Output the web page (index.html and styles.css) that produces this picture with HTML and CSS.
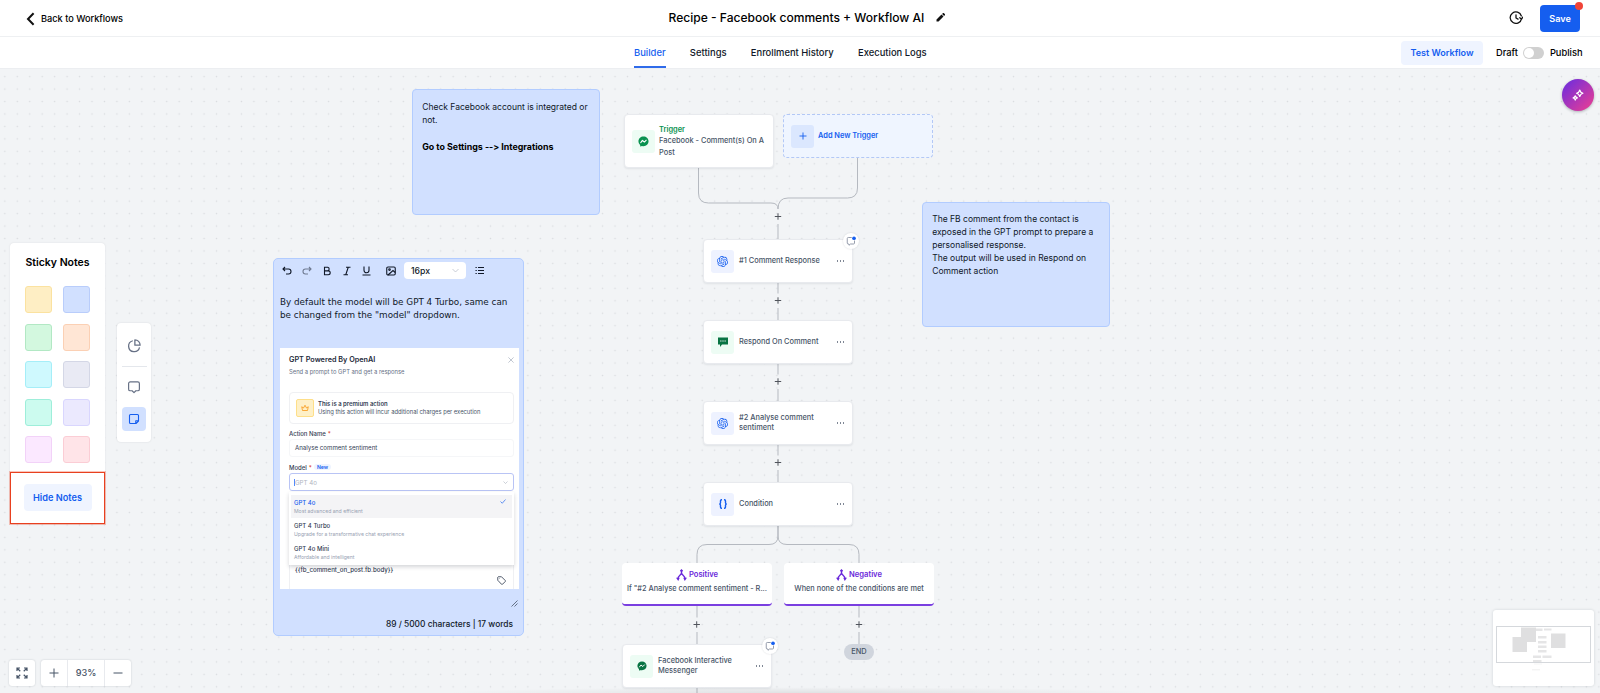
FILE: index.html
```
<!DOCTYPE html>
<html lang="en">
<head>
    <meta charset="UTF-8">
    <meta name="viewport" content="width=device-width, initial-scale=1.0">
    <title>Recipe - Facebook comments + Workflow AI</title>
    <link rel="stylesheet" href="styles.css">
</head>
<body>
    <!-- shared icons -->
    <svg class="sprite">
      <symbol id="i-openai" viewBox="0 0 24 24">
        <path fill="currentColor" d="M22.2819 9.8211a5.9847 5.9847 0 0 0-.5157-4.9108 6.0462 6.0462 0 0 0-6.5098-2.9A6.0651 6.0651 0 0 0 4.9807 4.1818a5.9847 5.9847 0 0 0-3.9977 2.9 6.0462 6.0462 0 0 0 .7427 7.0966 5.98 5.98 0 0 0 .511 4.9107 6.051 6.051 0 0 0 6.5146 2.9001A5.9847 5.9847 0 0 0 13.2599 24a6.0557 6.0557 0 0 0 5.7718-4.2058 5.9894 5.9894 0 0 0 3.9977-2.9001 6.0557 6.0557 0 0 0-.7475-7.0729zm-9.022 12.6081a4.4755 4.4755 0 0 1-2.8764-1.0408l.1419-.0804 4.7783-2.7582a.7948.7948 0 0 0 .3927-.6813v-6.7369l2.02 1.1686a.071.071 0 0 1 .038.0615v5.5826a4.504 4.504 0 0 1-4.4945 4.4944zm-9.6607-4.1254a4.4708 4.4708 0 0 1-.5346-3.0137l.142.0852 4.783 2.7582a.7712.7712 0 0 0 .7806 0l5.8428-3.3685v2.3324a.0804.0804 0 0 1-.0332.0615L9.74 19.9502a4.4992 4.4992 0 0 1-6.1408-1.6464zM2.3408 7.8956a4.485 4.485 0 0 1 2.3655-1.9728V11.6a.7664.7664 0 0 0 .3879.6765l5.8144 3.3543-2.0201 1.1685a.0757.0757 0 0 1-.071 0l-4.8303-2.7865A4.504 4.504 0 0 1 2.3408 7.872zm16.5963 3.8558L13.1038 8.364 15.1192 7.2a.0757.0757 0 0 1 .071 0l4.8303 2.7913a4.4944 4.4944 0 0 1-.6765 8.1042v-5.6772a.79.79 0 0 0-.407-.667zm2.0107-3.0231l-.142-.0852-4.7735-2.7818a.7759.7759 0 0 0-.7854 0L9.409 9.2297V6.8974a.0662.0662 0 0 1 .0284-.0615l4.8303-2.7866a4.4992 4.4992 0 0 1 6.6802 4.66zM8.3065 12.863l-2.02-1.1638a.0804.0804 0 0 1-.038-.0567V6.0742a4.4992 4.4992 0 0 1 7.3757-3.4537l-.142.0805L8.704 5.459a.7948.7948 0 0 0-.3927.6813zm1.0976-2.3654l2.602-1.4998 2.6069 1.4998v2.9994l-2.5974 1.4997-2.6067-1.4997Z"/>
      </symbol>
      <symbol id="i-messenger" viewBox="0 0 24 24">
        <path fill="currentColor" d="M12 1C5.700 1 1 5.600 1 11.600c0 3.200 1.300 5.900 3.500 7.800.200.200.300.400.300.700l.1 2c0 .6.600 1 1.200.8l2.200-1c.2-.1.400-.1.600 0 1 .3 2.100.4 3.100.4 6.300 0 11-4.600 11-10.700S18.300 1 12 1z"/>
        <path fill="none" stroke="#fff" stroke-width="2.4" stroke-linecap="round" stroke-linejoin="round" d="M6 14.300 9.600 9.700 14 13.200 18 9.200"/>
      </symbol>
      <symbol id="i-branch" viewBox="0 0 20 22">
        <path fill="none" stroke="currentColor" stroke-width="2.600" d="M10 3v5M10 7C9.500 12 3.800 11 3.300 18M10 7c.5 5 6.200 4 6.700 11"/>
        <path fill="currentColor" d="M10 0l3 3-3 3-3-3zM0 16h6.800L4 22zM13.200 16H20L16 22z"/>
      </symbol>
      <symbol id="i-comment" viewBox="0 0 20 20">
        <path fill="none" stroke="#8a92a3" stroke-width="1.800" stroke-linejoin="round" d="M11.500 3H4.500A2 2 0 0 0 2.500 5v9a2 2 0 0 0 2 2H6v2.500L9 16h6a2 2 0 0 0 2-2V9"/>
        <circle cx="16" cy="4.500" r="3.700" fill="#155eef"/>
      </symbol>
    </svg>

    <header class="topbar">
      <a class="back">
        <svg width="9" height="14" viewBox="0 0 9 14"><path d="M7.600 1.200 2 7l5.600 5.800" fill="none" stroke="#111" stroke-width="2"/></svg>
        <span>Back to Workflows</span>
      </a>
      <div class="title">
        <span>Recipe - Facebook comments + Workflow AI</span>
        <svg width="9" height="9" viewBox="0 0 18 18"><path d="M1 17v-4L11 3l4 4L5 17zM12.200 1.800 14 0q1-.6 2 .4L17.600 2q1 1 .4 2l-1.800 1.800z" fill="#111"/></svg>
      </div>
      <div class="actions">
        <svg width="14" height="14" viewBox="0 0 24 24" fill="none" stroke="#111" stroke-width="2.200" stroke-linecap="round" stroke-linejoin="round"><path d="M21.500 13a9.800 9.800 0 1 1-.3-4.500M12 6.500V12l3.500 2M18.500 11.500l3 2.500 2-3.500"/></svg>
        <button class="save">Save<i class="unsaved"></i></button>
      </div>
    </header>

    <nav class="tabbar">
      <div class="tabs">
        <a class="tab active">Builder</a>
        <a class="tab">Settings</a>
        <a class="tab">Enrollment History</a>
        <a class="tab">Execution Logs</a>
      </div>
      <div class="publish">
        <button class="test">Test Workflow</button>
        <span>Draft</span>
        <i class="toggle"></i>
        <span>Publish</span>
      </div>
    </nav>

    <main class="canvas">
      <svg class="lines" viewBox="0 68 1600 625">
        <g class="edges">
          <path d="M698.500 168v25q0 10 10 10H771q7 0 7 6"/>
          <path d="M857.500 157v31q0 10-10 10H788q-10 0-10 11"/>
          <path d="M778 224v15M778 282v11.500M778 308v12M778 363v11.500M778 389v12M778 444v11.500M778 470v12"/>
          <path d="M778 525v11q0 8.500-9 8.500H707q-10 0-10 10v9M778 525v11q0 8.500 9 8.500h62q10 0 10 10v9"/>
          <path d="M697 606v11.500M697 632v12M859 606v11.500M859 632v12M697 687v6"/>
        </g>
        <path class="pluses" d="M774.800 216.500h6.400M778 213.300v6.400M774.800 300.500h6.400M778 297.300v6.400M774.800 381.500h6.400M778 378.300v6.400M774.800 462.500h6.400M778 459.300v6.400M693.500 624.500h6.400M696.700 621.300v6.400M855.800 624.500h6.400M859 621.300v6.400"/>
      </svg>

      <section class="note" id="note-check">
        <p>Check Facebook account is integrated or<br>not.</p>
        <p class="strong">Go to Settings --&gt; Integrations</p>
      </section>

      <section class="note" id="note-gpt">
        <p>The FB comment from the contact is<br>exposed in the GPT prompt to prepare a<br>personalised response.<br>The output will be used in Respond on<br>Comment action</p>
      </section>

      <div class="node trigger" id="node-trigger">
        <i class="chip green"><svg width="11" height="11"><use href="#i-messenger"/></svg></i>
        <div><b>Trigger</b><p>Facebook - Comment(s) On A<br>Post</p></div>
      </div>

      <div class="node add" id="node-add">
        <i class="chip"><svg width="8" height="8" viewBox="0 0 8 8"><path d="M4 .5v7M.5 4h7" stroke="#155eef" stroke-width=".9"/></svg></i>
        <b>Add New Trigger</b>
      </div>

      <div class="node" id="node-response">
        <i class="chip indigo"><svg width="11" height="11"><use href="#i-openai"/></svg></i>
        <p>#1 Comment Response</p>
        <i class="dots"></i>
        <i class="bubble"><svg width="10" height="10"><use href="#i-comment"/></svg></i>
      </div>

      <div class="node" id="node-respond">
        <i class="chip green"><svg width="10" height="10" viewBox="0 0 20 20"><path d="M0 1h20v14H8l-4 5v-5H0z" fill="#087443"/><path d="M4.500 8h2.400M8.800 8h2.400M13.100 8h2.400" stroke="#fff" stroke-width="2.300"/></svg></i>
        <p>Respond On Comment</p>
        <i class="dots"></i>
      </div>

      <div class="node" id="node-analyse">
        <i class="chip indigo"><svg width="11" height="11"><use href="#i-openai"/></svg></i>
        <p>#2 Analyse comment<br>sentiment</p>
        <i class="dots"></i>
      </div>

      <div class="node" id="node-condition">
        <i class="chip indigo"><svg width="10" height="10" viewBox="0 0 20 20" fill="none" stroke="#155eef" stroke-width="2.800"><path d="M8 1.500H7Q5 1.500 5 4v3.500Q5 10 2.500 10 5 10 5 12.500V16q0 2.500 2 2.500h1M12 1.500h1q2 0 2 2.500v3.500q0 2.500 2.500 2.500Q15 10 15 12.500V16q0 2.500-2 2.500h-1"/></svg></i>
        <p>Condition</p>
        <i class="dots"></i>
      </div>

      <div class="branch" id="branch-positive">
        <b><svg width="11" height="12"><use href="#i-branch"/></svg>Positive</b>
        <p>If "#2 Analyse comment sentiment - R...</p>
      </div>

      <div class="branch" id="branch-negative">
        <b><svg width="11" height="12"><use href="#i-branch"/></svg>Negative</b>
        <p>When none of the conditions are met</p>
      </div>

      <div class="node" id="node-messenger">
        <i class="chip green dark"><svg width="10" height="10"><use href="#i-messenger"/></svg></i>
        <p>Facebook Interactive<br>Messenger</p>
        <i class="dots"></i>
        <i class="bubble"><svg width="10" height="10"><use href="#i-comment"/></svg></i>
      </div>

      <div class="end">END</div>

      <!-- note being edited -->
      <section class="editor">
        <div class="toolbar">
          <svg class="t-undo" width="10" height="10" viewBox="0 0 20 20"><path d="M6 2 2 6l4 4M2.500 6H13a4.500 4.500 0 0 1 0 10H8"/></svg>
          <svg class="t-redo" width="10" height="10" viewBox="0 0 20 20"><path d="m14 2 4 4-4 4M17.500 6H7a4.500 4.500 0 0 0 0 10h5"/></svg>
          <svg class="t-bold" width="8" height="10" viewBox="0 0 16 20"><path d="M3 2.500h6.500a3.700 3.700 0 0 1 0 7.200H3zM3 9.700h7.500a3.900 3.900 0 0 1 0 7.800H3z"/></svg>
          <svg class="t-italic" width="8" height="10" viewBox="0 0 16 20"><path d="M6 2.500h9M1 17.500h9M10.500 2.500l-5 15"/></svg>
          <svg class="t-under" width="9" height="10" viewBox="0 0 18 20"><path d="M4 1v7.500a5 5 0 0 0 10 0V1M1 18h16"/></svg>
          <svg class="t-image" width="10" height="10" viewBox="0 0 20 20"><rect x="1.500" y="2" width="17" height="16" rx="2.500"/><circle cx="7" cy="7.200" r="1.600"/><path d="m4 18 10-9 4.500 4"/></svg>
          <div class="size">16px<svg width="7" height="5" viewBox="0 0 14 10"><path d="m1 2 6 6 6-6" fill="none" stroke="#b8bdc9" stroke-width="1.500"/></svg></div>
          <svg class="t-list" width="9" height="9" viewBox="0 0 18 18"><path d="M6 3h12M6 9h12M6 15h12M1 3h2.500M1 9h2.500M1 15h2.500"/></svg>
        </div>
        <p class="body">By default the model will be GPT 4 Turbo, same can<br>be changed from the "model" dropdown.</p>

        <div class="shot">
          <h3>GPT Powered By OpenAI<svg width="6" height="6" viewBox="0 0 6 6"><path d="m.4.4 5.200 5.200M5.600.4.4 5.600" stroke="#98a2b3" stroke-width=".6"/></svg></h3>
          <p class="lead">Send a prompt to GPT and get a response</p>
          <div class="premium">
            <i class="crown"><svg width="8" height="8" viewBox="0 0 16 16"><path d="M3 13 1.500 5.500 5 8l3-5.500L11 8l3.500-2.500L13 13z" fill="none" stroke="#f79009" stroke-width="1.500" stroke-linejoin="round"/></svg></i>
            <div><b>This is a premium action</b><p>Using this action will incur additional charges per execution</p></div>
          </div>
          <label class="label-name"><span>Action Name</span><em>*</em></label>
          <div class="input">Analyse comment sentiment</div>
          <label class="label-model"><span>Model</span><em>*</em><mark>New</mark></label>
          <div class="select"><span>GPT 4o</span><svg width="5" height="3" viewBox="0 0 10 6"><path d="m1 1 4 4 4-4" fill="none" stroke="#98a2b3"/></svg></div>
          <ul class="options">
            <li class="picked"><b>GPT 4o</b><small>Most advanced and efficient</small><svg width="6" height="5" viewBox="0 0 12 10"><path d="m1 5 3.500 3.500L11 1" fill="none" stroke="#155eef" stroke-width="1.300"/></svg></li>
            <li><b>GPT 4 Turbo</b><small>Upgrade for a transformative chat experience</small></li>
            <li><b>GPT 4o Mini</b><small>Affordable and intelligent</small></li>
          </ul>
          <div class="prompt">
            <span>{{fb_comment_on_post.fb.body}}</span>
            <svg width="9" height="9" viewBox="0 0 18 18" fill="none" stroke="#344054" stroke-width="1.700" stroke-linejoin="round"><path d="M1.500 2.500v6L9 16.500q1 .8 2 0l5.500-5.500q.8-1 0-2L9 1.500H2.500z"/><path d="M5 5h.8"/></svg>
          </div>
        </div>

        <svg class="resize" width="7" height="7" viewBox="0 0 7 7"><path d="M.5 6.500l6-6M3.500 6.500l3-3" stroke="#475467" stroke-width=".8"/></svg>
        <p class="count">89 / 5000 characters | 17 words</p>
      </section>

      <aside class="palette">
        <h2>Sticky Notes</h2>
        <div class="swatches">
          <i class="yellow"></i><i class="blue"></i>
          <i class="mint"></i><i class="orange"></i>
          <i class="cyan"></i><i class="gray"></i>
          <i class="teal"></i><i class="violet"></i>
          <i class="pink"></i><i class="rose"></i>
        </div>
        <div class="hide-box"><button>Hide Notes</button></div>
      </aside>

      <aside class="tools">
        <svg width="14" height="14" viewBox="0 0 24 24"><path d="M10 3a9.500 9.500 0 1 0 11.500 11.500M13.500 1.500v9h9a9 9 0 0 0-9-9z"/></svg>
        <hr>
        <svg width="14" height="14" viewBox="0 0 26 26"><path d="M6 3.500h14a3 3 0 0 1 3 3V17a3 3 0 0 1-3 3h-3.500L13 23.500 9.500 20H6a3 3 0 0 1-3-3V6.500a3 3 0 0 1 3-3z"/></svg>
        <i class="current"><svg width="12" height="12" viewBox="0 0 24 24"><path d="M5 3h14a2 2 0 0 1 2 2v11l-5 5H5a2 2 0 0 1-2-2V5a2 2 0 0 1 2-2zM15.500 20.500V15.500h5"/></svg></i>
      </aside>

      <div class="zoombar">
        <button class="expand"><svg width="12" height="12" viewBox="0 0 24 24"><path d="M2 8V2h6M2 2l6.500 6.500M16 2h6v6M22 2l-6.500 6.500M2 16v6h6M2 22l6.500-6.500M22 16v6h-6M22 22l-6.500-6.500"/></svg></button>
        <div class="zoom">
          <button><svg width="10" height="10" viewBox="0 0 10 10"><path d="M5 .5v9M.5 5h9"/></svg></button>
          <span>93%</span>
          <button><svg width="10" height="10" viewBox="0 0 10 10"><path d="M.5 5h9"/></svg></button>
        </div>
      </div>

      <button class="ai"><svg width="14" height="14" viewBox="0 0 28 28"><path d="M17.500 4q1.200 5.500 6.500 6.500-5.300 1.200-6.500 6.500-1.200-5.300-6.500-6.500 5.300-1 6.500-6.500zM8.500 15.500q.8 3.500 4.300 4.300-3.500.8-4.300 4.300-.8-3.500-4.300-4.300 3.500-.8 4.300-4.300z"/></svg></button>

      <svg class="minimap" viewBox="1493 610 101 76">
        <g fill="#dfdfe0">
          <path d="M1521 627.500h15v14.500h-9v10h-14.500v-15h8.500zM1551 633.500h14.500v14.500H1551z"/>
          <path opacity=".8" d="M1536 628.500h6.500v2.500h-6.500zM1544 628.500h7.500v2h-7.500zM1538 636h8.500v2.500h-8.500zM1538 641h8.500v2.500h-8.500zM1538 645.500h8.500v2.500h-8.500zM1538 650h8.500v2.500h-8.500zM1533 655.500h8v2.500h-8zM1542.500 655.500h9v2.500h-9zM1533 660h8.500v2h-8.500z"/>
          <path opacity=".35" d="M1532 669h8v1.500h-8zM1534 663.500h8v1h-8z"/>
        </g>
        <rect x="1496.500" y="626.500" width="94" height="36" fill="none" stroke="#d5d8dc"/>
      </svg>
      <div class="fade"></div>
    </main>
</body>
</html>
```
FILE: styles.css
```
* {
    margin: 0;
    padding: 0;
    box-sizing: border-box;
}

body {
    width: 1600px;
    height: 693px;
    overflow: hidden;
    display: flex;
    flex-direction: column;
    font-family: Inter, "Liberation Sans", sans-serif;
    font-size: 9.2px;
    font-weight: 500;
    color: #101828;
}

svg {
    display: block;
    flex: none;
}

button {
    border: none;
    font: inherit;
}

b {
    font-weight: 600;
}

i {
    font-style: normal;
}

.sprite {
    position: absolute;
    width: 0;
    height: 0;
}

/* header */
.topbar {
    height: 37px;
    display: grid;
    grid-template-columns: 1fr auto 1fr;
    align-items: center;
    background-color: #fff;
    border-bottom: 1px solid #eef0f2;
    color: #000;
}

.back {
    display: flex;
    align-items: center;
    gap: 6px;
    padding: 1px 0 0 26px;
}

.title {
    display: flex;
    align-items: center;
    gap: 12px;
    padding: 0 0 1px 14px;
    font-size: 12.05px;
}

.actions {
    display: flex;
    justify-content: flex-end;
    align-items: center;
    gap: 17px;
    padding-right: 20px;
}

.save {
    position: relative;
    width: 40px;
    height: 27px;
    margin-top: 1px;
    border-radius: 4px;
    background-color: #155eef;
    color: #fff;
    font-size: 9.1px;
    font-weight: 600;
}

.unsaved {
    position: absolute;
    top: -3px;
    right: -3px;
    width: 8px;
    height: 8px;
    border-radius: 50%;
    background-color: #f04438;
}

.tabbar {
    height: 31px;
    display: flex;
    justify-content: space-between;
    background-color: #fff;
    color: #101828;
}

.tabs {
    display: flex;
    gap: 24.3px;
    padding-left: 634px;
    font-size: 9.42px;
}

.tab {
    height: 31px;
    line-height: 31px;
}

.active {
    color: #155eef;
    border-bottom: 2px solid #2f6bea;
}

.publish {
    display: flex;
    align-items: center;
    padding-right: 17.5px;
    font-size: 9.3px;
    color: #000;
}

.test {
    width: 82px;
    height: 24px;
    margin-right: 13px;
    border-radius: 4px;
    background-color: #eff4ff;
    color: #155eef;
    font-size: 9.05px;
    font-weight: 600;
}

.toggle {
    width: 21px;
    height: 12px;
    margin: 0 6px 0 5px;
    padding: 1px;
    border-radius: 6px;
    background-color: #d0d0d0;
}

.toggle::before {
    content: "";
    display: block;
    width: 10px;
    height: 10px;
    border-radius: 50%;
    background-color: #fff;
}

/* canvas */
.canvas {
    position: relative;
    flex: 1;
    background-color: #f2f4f6;
    background-image: radial-gradient(circle, #d9dcdf 0.5px, transparent 1.1px);
    background-size: 12.46px 12.46px;
    background-position: -1.4px 2.4px;
    box-shadow: inset 0 1px 0 #eceef1;
}

.lines {
    position: absolute;
    left: 0;
    top: 0;
    width: 1600px;
    height: 625px;
}

.edges {
    fill: none;
    stroke: #b5b9c0;
    stroke-width: 1;
}

.pluses {
    stroke: #50545c;
    stroke-width: 1;
}

.note {
    position: absolute;
    width: 188px;
    height: 126px;
    padding: 10.5px 10px 0 9.2px;
    border: 1px solid #b2ccff;
    border-radius: 4px;
    background-color: #d1e0ff;
    font-size: 8.52px;
    font-weight: 400;
    line-height: 13px;
    white-space: nowrap;
}

.strong {
    margin-top: 13px;
    font-size: 8.87px;
    font-weight: 700;
    font-feature-settings: "calt" 0;
    color: #000;
}

.node {
    position: absolute;
    width: 150px;
    height: 44px;
    display: flex;
    align-items: center;
    padding-left: 7px;
    gap: 5px;
    border: 1px solid #e8eaee;
    border-radius: 4px;
    background-color: #fff;
    box-shadow: 0 1px 2px rgba(16, 24, 40, 0.08);
    font-size: 7.4px;
    line-height: 10px;
    color: #475467;
    white-space: nowrap;
}

.chip {
    width: 23px;
    height: 23px;
    display: flex;
    align-items: center;
    justify-content: center;
    border-radius: 3px;
    background-color: #dbe7fe;
    color: #155eef;
}

.green {
    background-color: #edfcf4;
    color: #099250;
}

.dark {
    color: #087443;
}

.indigo {
    background-color: #eef2ff;
}

.dots {
    position: absolute;
    right: 7px;
    top: 20px;
    width: 9px;
    height: 2px;
    background: radial-gradient(circle, #7f8795 0.5px, transparent 1.1px) 0 0 / 3px 2px;
}

.bubble {
    position: absolute;
    right: -7px;
    top: -7px;
    width: 16px;
    height: 16px;
    display: flex;
    align-items: center;
    justify-content: center;
    border-radius: 50%;
    background-color: #fff;
    box-shadow: 0 0 2px rgba(16, 24, 40, 0.15);
}

.trigger {
    height: 54px;
    gap: 4px;
    line-height: 11.5px;
}

.trigger b {
    color: #099250;
}

.add {
    gap: 4px;
    border: 1px dashed #b3c8f6;
    background-color: #eff5ff;
    color: #155eef;
    box-shadow: none;
}

.branch {
    position: absolute;
    width: 150px;
    height: 43px;
    padding-top: 5px;
    border-radius: 4px;
    border-bottom: 2px solid #7a3fe0;
    background-color: #fff;
    font-size: 7.35px;
    line-height: 15px;
    text-align: center;
    color: #475467;
    white-space: nowrap;
}

.branch b {
    height: 13px;
    display: flex;
    justify-content: center;
    align-items: center;
    gap: 2px;
    font-size: 7.6px;
    color: #6927da;
}

.end {
    position: absolute;
    left: 844px;
    top: 576px;
    width: 30px;
    height: 16px;
    border-radius: 8px;
    background-color: #d0d5dd;
    font-size: 7.4px;
    line-height: 16px;
    text-align: center;
    color: #475467;
}

#note-check { left: 412px; top: 21px; }
#note-gpt { left: 922px; top: 134px; height: 125px; padding-top: 10px; }
#node-trigger { left: 624px; top: 46px; }
#node-add { left: 783px; top: 46px; }
#node-response { left: 703px; top: 171px; }
#node-respond { left: 703px; top: 252px; }
#node-analyse { left: 703px; top: 333px; }
#node-condition { left: 703px; top: 414px; }
#branch-positive { left: 622px; top: 495px; }
#branch-negative { left: 784px; top: 495px; }
#node-messenger { left: 622px; top: 576px; }

/* note editor */
.editor {
    position: absolute;
    left: 273px;
    top: 190px;
    width: 251px;
    height: 378px;
    padding: 3px 4px 0 6px;
    border: 1px solid #b2ccff;
    border-radius: 5px;
    background-color: #d1e0ff;
}

.toolbar {
    height: 17px;
    display: flex;
    align-items: center;
    padding-left: 2px;
    fill: none;
    stroke: #101828;
    stroke-width: 2.2;
}

.t-undo { margin-right: 10px; }
.t-redo { margin-right: 11px; opacity: 0.5; }
.t-bold { margin-right: 12px; }
.t-italic { margin-right: 11px; }
.t-under { margin-right: 15px; }
.t-image { margin-right: 8px; }

.size {
    width: 62px;
    height: 17px;
    display: flex;
    align-items: center;
    justify-content: space-between;
    margin-right: 9px;
    padding: 0 7px;
    border-radius: 4px;
    background-color: #fff;
    font-size: 8.7px;
}

.body {
    margin-top: 17px;
    font-family: "DejaVu Sans", Verdana, sans-serif;
    font-size: 8.8px;
    font-weight: 400;
    line-height: 13px;
    white-space: nowrap;
}

.shot {
    height: 241px;
    margin-top: 26px;
    padding: 7px 5px 0 9px;
    overflow: hidden;
    background-color: #fff;
    color: #344054;
    font-size: 6.15px;
    white-space: nowrap;
}

.shot h3 {
    display: flex;
    justify-content: space-between;
    align-items: center;
    height: 9px;
    font-size: 7.25px;
    font-weight: 600;
    color: #1d2939;
}

.lead {
    margin-top: 3.5px;
    font-size: 5.83px;
    font-weight: 400;
    line-height: 8px;
    color: #667085;
}

.premium {
    height: 32px;
    display: flex;
    align-items: center;
    gap: 4px;
    margin-top: 16.5px;
    padding-left: 6px;
    border: 1px solid #eff0f3;
    border-radius: 4px;
    font-size: 5.8px;
    line-height: 8.5px;
}

.premium b {
    font-size: 5.95px;
}

.premium p {
    font-weight: 400;
    color: #475467;
}

.crown {
    width: 18px;
    height: 18px;
    display: flex;
    align-items: center;
    justify-content: center;
    border: 1px solid #fedf89;
    border-radius: 2px;
    background-color: #fef0c7;
}

.shot label {
    display: flex;
    align-items: center;
    gap: 2px;
    height: 8px;
    font-size: 6px;
}

.label-name {
    margin-top: 5px;
}

.label-model {
    margin-top: 6px;
}

.shot em {
    font-style: normal;
    color: #d92d20;
}

.shot mark {
    padding: 0 3px;
    border-radius: 4px;
    background-color: #eff4ff;
    color: #155eef;
    font-size: 5.1px;
    font-weight: 600;
}

.input {
    height: 18px;
    margin-top: 2px;
    padding-left: 5px;
    border: 1px solid #f5f6f8;
    border-radius: 3px;
    line-height: 16px;
    font-weight: 400;
}

.select {
    height: 18px;
    display: flex;
    justify-content: space-between;
    align-items: center;
    margin-top: 2px;
    padding: 0 5px 0 4px;
    border: 1px solid #b9c4f5;
    border-radius: 3px;
    font-weight: 400;
    color: #b0b5c0;
}

.select span {
    border-left: 1px solid #528bff;
}

.options {
    position: relative;
    height: 73px;
    margin-top: 1px;
    padding: 2.5px 2px;
    list-style: none;
    background-color: #fff;
    box-shadow: 0 2px 4px rgba(16, 24, 40, 0.18);
}

.options li {
    position: relative;
    height: 23px;
    padding: 4px 3px;
}

.options b,
.options small {
    display: block;
    font-size: 6px;
    font-weight: 500;
    line-height: 8px;
}

.options small {
    font-size: 5.12px;
    font-weight: 400;
    color: #98a2b3;
}

.options .picked {
    background-color: #f4f4f6;
}

.options .picked b {
    color: #155eef;
}

.picked svg {
    position: absolute;
    right: 6px;
    top: 4px;
}

.prompt {
    height: 40px;
    padding: 1px 7px 0 5px;
    border: 1px solid #eff0f3;
    border-top: none;
}

.prompt span {
    display: block;
    line-height: 8px;
}

.prompt svg {
    margin: 2px 0 0 auto;
}

.resize {
    margin: 11px 1px 0 auto;
}

.count {
    margin-top: 12px;
    padding-right: 6px;
    text-align: right;
    font-size: 8.4px;
}

/* floating panels */
.palette {
    position: absolute;
    left: 10px;
    top: 175px;
    width: 95px;
    height: 281px;
    border-radius: 4px;
    background-color: #fff;
    box-shadow: 0 0 2px rgba(16, 24, 40, 0.1);
}

.palette h2 {
    padding-top: 13px;
    text-align: center;
    font-size: 10.5px;
    font-weight: 600;
    line-height: 14px;
    color: #000;
}

.swatches {
    display: grid;
    grid-template-columns: 27px 27px;
    grid-auto-rows: 27px;
    gap: 10.5px;
    margin: 16px 0 0 15px;
}

.swatches i {
    border-width: 1px;
    border-style: solid;
    border-radius: 3px;
}

.yellow { background-color: #feeec4; border-color: #fbe2a0; }
.blue { background-color: #d1e0ff; border-color: #b9cdfb; }
.mint { background-color: #d3f8df; border-color: #b2e8c4; }
.orange { background-color: #ffe6d5; border-color: #fbd0b4; }
.cyan { background-color: #cff9fe; border-color: #a5eef8; }
.gray { background-color: #e9eaf4; border-color: #d4d7e6; }
.teal { background-color: #ccfbef; border-color: #9eeeda; }
.violet { background-color: #ebe9fe; border-color: #d9d6fe; }
.pink { background-color: #fbe8ff; border-color: #f2d2f8; }
.rose { background-color: #ffe4e8; border-color: #fbcdd5; }

.hide-box {
    height: 52px;
    display: flex;
    align-items: center;
    justify-content: center;
    margin-top: 9px;
    padding-bottom: 1px;
    border: 1px solid #e8401f;
    outline: 1px solid rgba(240, 90, 60, 0.35);
}

.hide-box button {
    width: 68px;
    height: 27px;
    border-radius: 4px;
    background-color: #eff4ff;
    color: #155eef;
    font-weight: 600;
}

.tools {
    position: absolute;
    left: 117px;
    top: 255px;
    width: 34px;
    height: 119px;
    display: flex;
    flex-direction: column;
    align-items: center;
    padding-top: 16px;
    border-radius: 4px;
    background-color: #fff;
    box-shadow: 0 0 2px rgba(16, 24, 40, 0.12);
    fill: none;
    stroke: #667085;
    stroke-width: 2.2;
    stroke-linejoin: round;
}

.tools hr {
    width: 25px;
    margin: 13px 0;
    border: none;
    border-top: 1px solid #e4e7ec;
}

.current {
    width: 24px;
    height: 24px;
    display: flex;
    align-items: center;
    justify-content: center;
    margin-top: 13px;
    border-radius: 4px;
    background-color: #d1e0ff;
    stroke: #155eef;
}

.zoombar {
    position: absolute;
    left: 9px;
    top: 592px;
    display: flex;
    gap: 6px;
    fill: none;
    stroke: #475467;
}

.expand,
.zoom {
    height: 26px;
    border-radius: 3px;
    background-color: #fff;
    box-shadow: 0 0 2px rgba(16, 24, 40, 0.2);
}

.expand {
    width: 26px;
    display: grid;
    place-items: center;
    stroke-width: 2.4;
}

.zoom {
    width: 90px;
    display: flex;
    color: #475467;
}

.zoom button {
    width: 26px;
    display: grid;
    place-items: center;
    background: none;
}

.zoom span {
    flex: 1;
    border: 1px solid #e8eaee;
    border-width: 0 1px;
    line-height: 25px;
    text-align: center;
}

.ai {
    position: absolute;
    right: 6px;
    top: 11px;
    width: 32px;
    height: 32px;
    display: grid;
    place-items: center;
    border-radius: 50%;
    background-image: linear-gradient(135deg, #7a2fd6 15%, #e33c98 90%);
    box-shadow: 0 1px 3px rgba(16, 24, 40, 0.3);
    fill: none;
    stroke: #fff;
    stroke-width: 2.4;
    stroke-linejoin: round;
}

.minimap {
    position: absolute;
    left: 1493px;
    top: 542px;
    width: 101px;
    height: 76px;
    border-radius: 3px;
    background-color: #fff;
    box-shadow: 0 0 3px rgba(16, 24, 40, 0.15);
}

.fade {
    position: absolute;
    left: 440px;
    bottom: 0;
    width: 720px;
    height: 6px;
    background-image: radial-gradient(ellipse at bottom, rgba(0, 0, 0, 0.08), transparent 70%);
}
```
